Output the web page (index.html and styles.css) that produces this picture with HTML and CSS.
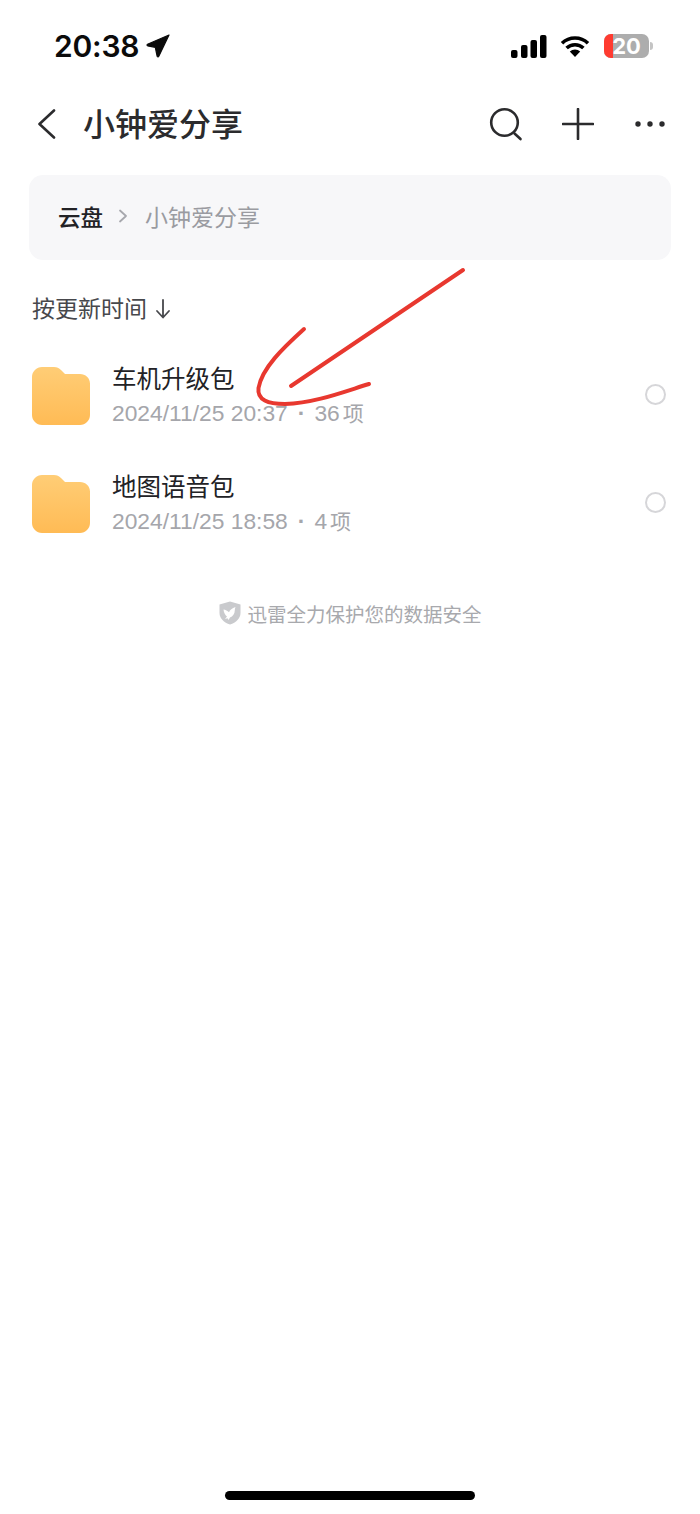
FILE: index.html
```html
<!DOCTYPE html>
<html lang="zh">
<head>
<meta charset="utf-8">
<title>小钟爱分享</title>
<link rel="stylesheet" href="styles.css">
</head>
<body>
<div class="page">
  <div class="status">
    <div class="status-left">
      <span class="clock">20:38</span>
      <svg class="loc" width="25" height="25" viewBox="0 0 25 25"><path d="M24 1 2.500 10.300c-.8.4-.6 1.600.3 1.600l7.500 1.400 1.800 8.800c.2.900 1.300 1 1.700.2z" fill="#0b0b0b" stroke="#0b0b0b" stroke-width="1.200" stroke-linejoin="round"/></svg>
    </div>
    <div class="status-right">
      <svg width="36" height="23" viewBox="0 0 36 23"><rect x="0" y="15" width="6.500" height="8" rx="2" fill="#000"/><rect x="10" y="10" width="6.500" height="13" rx="2" fill="#000"/><rect x="19.500" y="5" width="6.500" height="18" rx="2" fill="#000"/><rect x="29" y="0" width="6.500" height="23" rx="2" fill="#000"/></svg>
      <svg class="wifi" width="30" height="22" viewBox="0 0 30 22"><path d="M2 8.200a19 19 0 0 1 26 0M6.600 13a12.300 12.300 0 0 1 16.800 0" fill="none" stroke="#000" stroke-width="3.600" stroke-linecap="butt"/><path d="M15 22l-5.200-5.400a7.500 7.500 0 0 1 10.400 0z" fill="#000"/></svg>
      <div class="battery"><span class="bat-red"></span><span class="bat-num">20</span></div>
      <span class="bat-tip"></span>
    </div>
  </div>

  <div class="nav">
    <svg class="back" width="20" height="30" viewBox="0 0 20 30"><path d="M17 1.500 2.500 15 17 28.500" fill="none" stroke="#2b2b2d" stroke-width="2.600" stroke-linecap="round" stroke-linejoin="round"/></svg>
    <h1 class="title">小钟爱分享</h1>
    <div class="nav-actions">
      <svg class="act-search" width="34" height="34" viewBox="0 0 34 34"><circle cx="15.500" cy="15.500" r="13.300" fill="none" stroke="#2b2b2d" stroke-width="2.600"/><path d="M25.500 26.500l6 5.500" stroke="#2b2b2d" stroke-width="2.600" stroke-linecap="round"/></svg>
      <svg class="act-plus" width="32" height="32" viewBox="0 0 32 32"><path d="M16 1v30M1 16h30" stroke="#2b2b2d" stroke-width="2.600" stroke-linecap="round"/></svg>
      <svg width="30" height="8" viewBox="0 0 30 8"><circle cx="3" cy="4" r="2.700" fill="#2b2b2d"/><circle cx="15" cy="4" r="2.700" fill="#2b2b2d"/><circle cx="27" cy="4" r="2.700" fill="#2b2b2d"/></svg>
    </div>
  </div>

  <div class="crumbs">
    <span class="crumb-root">云盘</span>
    <svg width="10" height="14" viewBox="0 0 10 14"><path d="M2 1.500 8 7l-6 5.500" fill="none" stroke="#a6a7ad" stroke-width="1.800" stroke-linecap="round" stroke-linejoin="round"/></svg>
    <span class="crumb-cur">小钟爱分享</span>
  </div>

  <div class="sort">
    <span>按更新时间</span>
    <svg width="16" height="20" viewBox="0 0 16 20"><path d="M8 1v17M2 12l6 6.500L14 12" fill="none" stroke="#47484c" stroke-width="1.800" stroke-linecap="round" stroke-linejoin="round"/></svg>
  </div>

  <div class="list">
    <div class="row">
      <svg class="folder" width="58" height="58" viewBox="0 0 58 58"><use href="#folder"/></svg>
      <div class="info">
        <div class="name">车机升级包</div>
        <div class="meta">2024/11/25 20:37<span class="dot">·</span>36<span class="unit">项</span></div>
      </div>
      <span class="radio"></span>
    </div>
    <div class="row">
      <svg class="folder" width="58" height="58" viewBox="0 0 58 58"><use href="#folder"/></svg>
      <div class="info">
        <div class="name">地图语音包</div>
        <div class="meta">2024/11/25 18:58<span class="dot">·</span>4<span class="unit">项</span></div>
      </div>
      <span class="radio"></span>
    </div>
  </div>

  <div class="safe">
    <svg width="22" height="24" viewBox="0 0 22 24"><path d="M11 .5 21.500 3.500v8.500c0 5.500-4.500 9.500-10.500 11.500C5 21.500.5 17.500.5 12V3.500z" fill="#c9cacd"/><path d="M4.500 8.500c2 .3 4 1.200 5.500 2.700 1-2.200 3-4.200 6.500-5.200-.5 1.300-.7 2.300-.7 3.300 0 3.700-2 6.200-4.800 7.200l-1.500 2.500-1-1.800-2.500.8 2-2.500c-2-1.500-3.200-4-3.500-7z" fill="#fff"/></svg>
    <span>迅雷全力保护您的数据安全</span>
  </div>

  <div class="home"></div>
</div>

<svg class="ink" width="700" height="1514" viewBox="0 0 700 1514"><path d="M463 270 291 386" fill="none" stroke="#e8382f" stroke-width="4" stroke-linecap="round"/><path d="M304 329C283 348 262 368 258.500 388C257 400 268 404 285 404C315 403 343 392 369 384" fill="none" stroke="#e8382f" stroke-width="4" stroke-linecap="round"/></svg>

<svg width="0" height="0" class="defs"><defs>
  <linearGradient id="fg" x1="0" y1="0" x2="0" y2="1"><stop offset="0" stop-color="#ffcd76"/><stop offset="1" stop-color="#ffbb55"/></linearGradient>
  <symbol id="folder" viewBox="0 0 58 58"><path d="M10 0h12c3 0 5 1 7 3l4 4h15c5.500 0 10 4 10 9.500V48c0 5.500-4.500 10-10 10H10C4.500 58 0 53.500 0 48V10C0 4.500 4.500 0 10 0z" fill="url(#fg)"/></symbol>
</defs></svg>
</body>
</html>
```
FILE: styles.css
```css
* { box-sizing: border-box; }
html, body { margin: 0; padding: 0; background: #fff; }
body { font-family: "Noto Sans CJK SC", "Liberation Sans", sans-serif; width: 700px; height: 1514px; overflow: hidden; position: relative; }
.page { width: 700px; height: 1514px; display: flex; flex-direction: column; position: relative; }

.status { height: 92px; padding: 24px 47px 0 54px; display: flex; justify-content: space-between; align-items: flex-start; }
.status-left { display: flex; align-items: center; gap: 6px; height: 44px; }
.clock { font: 600 30px/44px Inter, "Liberation Sans", sans-serif; color: #0b0b0b; letter-spacing: -0.2px; }
.status-right { display: flex; align-items: center; height: 44px; }
.wifi { margin-left: 13px; }
.battery { position: relative; width: 45px; height: 24px; margin-left: 14px; border-radius: 7px; background: #adadad; overflow: hidden; text-align: center; }
.bat-red { position: absolute; left: 0; top: 0; bottom: 0; width: 9px; background: #ff3b30; }
.bat-num { position: relative; font: 700 22px/24px Inter, "Liberation Sans", sans-serif; color: #fff; }
.bat-tip { width: 3px; height: 8px; margin-left: 1px; background: #c4c4c4; border-radius: 0 3px 3px 0; }

.nav { height: 64px; padding: 0 35px 0 37px; display: flex; align-items: center; }
.back { flex: none; }
.title { margin: 0 0 4px 26px; font-size: 32px; font-weight: 500; line-height: 60px; color: #2b2b2d; flex: 1; white-space: nowrap; }
.nav-actions { display: flex; align-items: center; }
.act-search { margin-right: 39px; }
.act-plus { margin-right: 41px; }

.crumbs { margin: 19px 29px 0; height: 85px; background: #f7f7f9; border-radius: 14px; padding: 0 29px 4px; display: flex; align-items: center; font-size: 23px; }
.crumb-root { color: #222226; font-weight: 500; font-size: 22.500px; }
.crumbs svg { margin: 0 17px 0 15px; flex: none; }
.crumb-cur { color: #9a9ba1; }

.sort { margin: 25px 0 0 32px; height: 44px; font-size: 23px; line-height: 44px; color: #47484c; display: flex; align-items: center; gap: 8px; }
.sort svg { flex: none; margin-top: 4px; }

.list { margin-top: 11px; display: flex; flex-direction: column; }
.row { height: 108px; padding: 0 34px 0 32px; display: flex; align-items: center; }
.folder { flex: none; margin-top: 4px; }
.info { flex: 1; margin-left: 22px; }
.name { font-size: 24.500px; line-height: 36px; color: #222226; margin-top: 1px; }
.meta { font: 22.800px/32px "Liberation Sans", "Noto Sans CJK SC", sans-serif; color: #a5a6ab; white-space: nowrap; }
.dot { margin: 0 9px 0 10px; font-weight: 700; }
.unit { margin-left: 3px; font-family: "Noto Sans CJK SC", sans-serif; font-size: 21px; }
.radio { flex: none; width: 21px; height: 21px; border: 2px solid #d6d6d9; border-radius: 50%; }

.safe { margin-top: 37px; padding-left: 1px; display: flex; justify-content: center; align-items: center; gap: 6px; height: 40px; font-size: 19.500px; color: #a8a9ad; }

.home { position: absolute; left: 225px; top: 1491px; width: 250px; height: 9px; border-radius: 5px; background: #000; }

.ink { position: absolute; left: 0; top: 0; pointer-events: none; }
.defs { position: absolute; }
```
